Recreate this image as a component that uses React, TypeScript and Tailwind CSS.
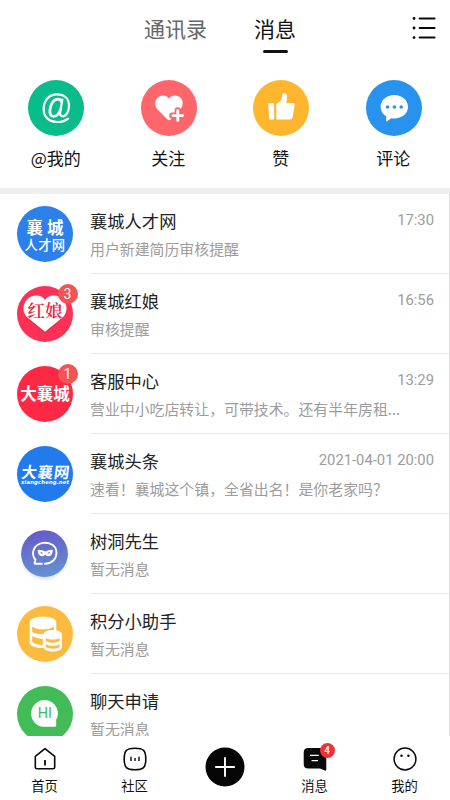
import { useState, type ReactNode } from "react"

interface Conversation {
  id: string
  name: string
  preview: string
  time?: string
  unread?: number
  avatar: ReactNode
}

const AtIcon = () => (
  <svg viewBox="0 0 56 56" className="size-14">
    <circle cx="28" cy="28" r="28" fill="#0abc8b" />
    <g fill="none" stroke="#fff" strokeLinecap="round">
      <path d="M40.2 38.6C37.4 41 33.8 42 29.6 42C20.6 42 15.7 36.7 15.7 29C15.7 20.4 21 14.3 29 14.3C36.6 14.3 41 18.8 41 25.8C41 32.2 38 36.3 34.7 36.3C32.4 36.3 31.7 34.6 32.2 31.6L34.4 19.6" strokeWidth="2.2" />
      <path d="M33.6 21.8C32.8 19.8 31.6 19.2 29.9 19.2C25.4 19.2 22.4 24.4 21.9 29.8C21.5 34 22.8 36.4 25.4 36.4C28.6 36.4 31.2 33.2 32.4 29.6" strokeWidth="2.8" />
    </g>
  </svg>
)

const FollowIcon = () => (
  <svg viewBox="0 0 56 56" className="size-14">
    <circle cx="28" cy="28" r="28" fill="#fd676b" />
    <path d="M28 18.4C25.6 15 20.2 14.5 16.8 17.6C13.2 21 13.4 26 16.6 29.4L26.4 39.5Q28 41 29.6 39.5L39.2 29.4C42.4 26 42.6 21 39.2 17.6C35.8 14.5 30.4 15 28 18.4Z" fill="#fff" />
    <path d="M36.8 30.4V41M31.4 35.6H41.8" stroke="#fd676b" strokeWidth="6.4" strokeLinecap="round" />
    <path d="M36.8 30.8V40.4M32 35.6H41.6" stroke="#fff" strokeWidth="2.9" strokeLinecap="round" />
  </svg>
)

const LikeIcon = () => (
  <svg viewBox="0 0 56 56" className="size-14">
    <circle cx="28" cy="28" r="28" fill="#feb62f" />
    <path d="M15.9 23.3H20.3Q21.1 23.3 21.1 24.1V38.8Q21.1 39.6 20.3 39.6H17.2Q16.3 39.6 16.2 38.7L15.2 24.1Q15.2 23.3 15.9 23.3Z" fill="#fff" />
    <path d="M23.3 25.1Q23.3 23.9 24.5 23.3C28 21.6 29.1 18.7 29.1 15.1C29.1 12 33.9 11.9 34.1 17.1Q34.1 20.2 33.2 22.9H39.9Q41.9 22.9 41.6 25L39.7 37.2Q39.3 39.6 36.8 39.6H24.5Q23.3 39.6 23.3 38.4Z" fill="#fff" />
  </svg>
)

const CommentIcon = () => (
  <svg viewBox="0 0 56 56" className="size-14">
    <circle cx="28" cy="28" r="28" fill="#2793ee" />
    <path d="M28.3 15C36 15 42 20.1 42 26.8C42 33.6 36 38.5 28.3 38.5Q26.8 38.5 25.4 38.3L21 41.3Q20 41.8 20.1 40.6L20.4 36.6C16.9 34.4 14.6 31 14.6 26.8C14.6 20.1 20.6 15 28.3 15Z" fill="#fff" />
    <g fill="#2793ee">
      <circle cx="21.6" cy="27" r="1.8" />
      <circle cx="28.4" cy="27" r="1.8" />
      <circle cx="35.2" cy="27" r="1.8" />
    </g>
  </svg>
)

const JobsAvatar = () => (
  <div className="flex size-14 flex-col items-center rounded-full bg-[#2c80e9] pt-[13px] text-white">
    <div className="flex gap-[4px] text-[16.5px] leading-[17px] font-bold">
      <span>襄</span>
      <span>城</span>
    </div>
    <div className="mt-[2px] text-[13.3px] leading-[14px] font-medium tracking-[0.4px] whitespace-nowrap">人才网</div>
  </div>
)

const MatchAvatar = () => (
  <svg viewBox="0 0 56 56" className="size-14">
    <circle cx="28" cy="28" r="28" fill="#fc3155" />
    <path d="M28 15.2C24.5 8.8 14.5 8.6 9.5 14.3C4.6 20 5.6 27.8 10.6 32.7L28 47.6L45.4 32.7C50.4 27.8 51.4 20 46.5 14.3C41.5 8.6 31.5 8.8 28 15.2Z" fill="#c91f42" opacity="0.4" />
    <path d="M28 13.9C24.5 8.3 15 8.2 10 13.4C5 18.8 5.4 26.6 10.4 31.5L28 45.8L45.6 31.5C50.6 26.6 51 18.8 46 13.4C41 8.2 31.5 8.3 28 13.9Z" fill="#fff" />
    <text x="28" y="31" textAnchor="middle" fontSize="17.5" fontWeight="600" fill="#ee203f" className="font-['Noto_Serif_CJK_SC','Noto_Sans_CJK_SC',serif]">红娘</text>
  </svg>
)

const ServiceAvatar = () => (
  <div className="flex size-14 items-center justify-center rounded-full bg-[#fd2844] pb-px text-[16.5px] leading-none font-bold whitespace-nowrap text-white">
    大襄城
  </div>
)

const NewsAvatar = () => (
  <svg viewBox="0 0 56 56" className="size-14">
    <circle cx="28" cy="28" r="28" fill="#217bec" />
    <g fill="#fff" transform="skewX(-7)">
      <text x="7.6" y="32" fontSize="15.5" fontWeight="700" textLength="48">大襄网</text>
      <text x="8.5" y="38.2" fontSize="5.4" fontWeight="700" textLength="48" className="font-['DejaVu_Sans',sans-serif]">xiangcheng.net</text>
    </g>
  </svg>
)

const TreeHoleAvatar = () => (
  <svg viewBox="0 0 56 56" className="size-14">
    <defs>
      <linearGradient id="treehole" x1="0" y1="0" x2="0.15" y2="1">
        <stop offset="0" stopColor="#6657c9" />
        <stop offset="1" stopColor="#648fd0" />
      </linearGradient>
      <filter id="soft" x="-20%" y="-20%" width="140%" height="150%">
        <feGaussianBlur stdDeviation="1.6" />
      </filter>
    </defs>
    <circle cx="27.5" cy="30.2" r="22.8" fill="#bfc3ee" opacity="0.6" filter="url(#soft)" />
    <circle cx="27.5" cy="27.7" r="23.4" fill="url(#treehole)" />
    <path d="M25 37.8H18.2Q17.3 37.8 17.6 36.9L18.5 33.8C13.4 27.5 16.5 18.5 26 16.9C34 15.8 39.5 20.5 39.5 27C39.5 33 35 37.3 28 37.8" fill="none" stroke="#fff" strokeWidth="1.9" strokeLinecap="round" />
    <path d="M20.7 23.9Q24 23.2 28.3 25.5Q32.5 23.2 35.8 23.9Q35.7 29.6 31.6 30.3Q29.9 30.4 28.3 28.8Q26.6 30.4 24.9 30.3Q20.8 29.6 20.7 23.9Z" fill="#fff" />
    <path d="M23.2 26.3Q24.8 25.8 26 27.3Q24.1 28.2 23.2 26.3ZM33.3 26.3Q31.7 25.8 30.5 27.3Q32.4 28.2 33.3 26.3Z" fill="#645fc8" />
  </svg>
)

const PointsAvatar = () => (
  <svg viewBox="0 0 56 56" className="size-14">
    <circle cx="28" cy="28" r="28" fill="#fcbb3f" />
    <path d="M12.7 16.2C12.7 8.8 39.3 8.8 39.3 16.2V36.5C39.3 43.9 12.7 43.9 12.7 36.5Z" fill="#fff" />
    <path d="M15.2 20.6C20 24.4 32 24.4 36.9 20.6V24C33 23.5 28 24.5 26 28.2C22 28.2 18 27.6 15.2 26ZM15.2 30C18.5 32 21.5 32.7 25.8 32.9V38.9C21.5 38.8 18 38 15.2 36Z" fill="#fcbb3f" />
    <path d="M26.6 28.8C26.6 22.3 45 22.3 45 28.8V41C45 47 26.6 47 26.6 41Z" fill="#fff" />
    <path d="M29 32C32.5 34.2 39 34.2 42.6 32V35C39 37.3 32.5 37.3 29 35ZM29 38.3C32.5 40.5 39 40.5 42.6 38.3V41C39 43.2 32.5 43.2 29 41Z" fill="#fcbb3f" />
  </svg>
)

const ChatRequestAvatar = () => (
  <svg viewBox="0 0 56 56" className="size-14">
    <circle cx="28" cy="28" r="28" fill="#41bc56" />
    <path d="M27.5 14A13.4 13.4 0 0 1 40.9 27.4Q40.8 31 39.2 33.8V39.2Q39.2 40.8 37.6 40.8H27.5A13.4 13.4 0 0 1 27.5 14Z" fill="#fff" />
    <text x="27.8" y="32.4" textAnchor="middle" fontSize="14.5" fill="#41bc56" className="font-[Roboto,sans-serif]">HI</text>
  </svg>
)

const shortcuts = [
  { label: "@我的", icon: <AtIcon /> },
  { label: "关注", icon: <FollowIcon /> },
  { label: "赞", icon: <LikeIcon /> },
  { label: "评论", icon: <CommentIcon /> },
]

const conversations: Conversation[] = [
  { id: "jobs", name: "襄城人才网", preview: "用户新建简历审核提醒", time: "17:30", avatar: <JobsAvatar /> },
  { id: "match", name: "襄城红娘", preview: "审核提醒", time: "16:56", unread: 3, avatar: <MatchAvatar /> },
  { id: "service", name: "客服中心", preview: "营业中小吃店转让，可带技术。还有半年房租...", time: "13:29", unread: 1, avatar: <ServiceAvatar /> },
  { id: "news", name: "襄城头条", preview: "速看！襄城这个镇，全省出名！是你老家吗？", time: "2021-04-01 20:00", avatar: <NewsAvatar /> },
  { id: "treehole", name: "树洞先生", preview: "暂无消息", avatar: <TreeHoleAvatar /> },
  { id: "points", name: "积分小助手", preview: "暂无消息", avatar: <PointsAvatar /> },
  { id: "requests", name: "聊天申请", preview: "暂无消息", avatar: <ChatRequestAvatar /> },
]

const HomeIcon = () => (
  <svg viewBox="0 0 24 24" className="size-6" fill="none" stroke="#0a0a0a" strokeWidth="1.6" strokeLinejoin="round">
    <path d="M2.3 9.4L12 1.6L21.7 9.4V20.2Q21.7 21.8 20.1 21.8H3.9Q2.3 21.8 2.3 20.2Z" />
    <path d="M12 13V18.4" strokeWidth="1.8" />
  </svg>
)

const CommunityIcon = () => (
  <svg viewBox="0 0 24 24" className="size-6" fill="none" stroke="#0a0a0a" strokeWidth="1.6">
    <path d="M12 1.2C20.5 1.2 22.8 3.5 22.8 12S20.5 22.8 12 22.8S1.2 20.5 1.2 12S3.5 1.2 12 1.2Z" />
    <path d="M8 9.8V14M12 11V14M16 9.8V14" strokeWidth="1.4" />
  </svg>
)

const MessageIcon = () => (
  <svg viewBox="0 0 24 24" className="size-6">
    <path d="M5.2 .9H18.8Q23.3 .9 23.3 5.4V22.6Q23.3 24 22 23.6L17 21.6H5.2Q.7 21.6 .7 17.1V5.4Q.7 .9 5.2 .9Z" fill="#0a0a0a" />
    <path d="M7 8.3H15.8M8.6 13.6H15" stroke="#fff" strokeWidth="1.3" />
  </svg>
)

const MeIcon = () => (
  <svg viewBox="0 0 24 24" className="size-6">
    <circle cx="12" cy="12" r="10.9" fill="none" stroke="#0a0a0a" strokeWidth="1.5" />
    <circle cx="8.5" cy="8.7" r="1.2" />
    <circle cx="15.4" cy="8.7" r="1.2" />
  </svg>
)

function NavItem({ label, icon, badge }: { label: string; icon: ReactNode; badge?: number }) {
  return (
    <button className="flex w-[90px] flex-col items-center pt-[11px] pr-px">
      <span className="relative">
        {icon}
        {badge && (
          <span className="absolute -top-[4px] left-[17px] flex size-[15px] items-center justify-center rounded-full bg-[#f52f33] font-[Roboto,sans-serif] text-[10px] leading-none font-medium text-white">
            {badge}
          </span>
        )}
      </span>
      <span className="mt-[5px] text-[13.3px] leading-5 text-[#111]">{label}</span>
    </button>
  )
}

export default function App() {
  const [tab, setTab] = useState("消息")

  return (
    <div className="flex h-[800px] w-[450px] flex-col overflow-hidden bg-white font-['Noto_Sans_CJK_SC',sans-serif]">
      <header className="flex h-[60px] shrink-0 items-start pt-[13px] pr-[14px] pl-[144px]">
        {["通讯录", "消息"].map((name) => (
          <button
            key={name}
            onClick={() => setTab(name)}
            className={`mr-[47px] flex flex-col items-center text-[21px] leading-[30px] ${tab === name ? "text-[#111]" : "text-[#666]"}`}
          >
            {name}
            {tab === name && <span className="mt-[7px] h-[3px] w-[25px] rounded-full bg-[#111]" />}
          </button>
        ))}
        <svg viewBox="0 0 24 24" className="mt-[3px] ml-auto size-6" stroke="#0a0a0a" strokeWidth="2" strokeLinecap="round">
          <path d="M7.6 2.4H22.6M7.6 12H22.6M7.6 21.6H22.6" />
          <path d="M2 2.4H2.1M2 12H2.1M2 21.6H2.1" strokeWidth="2.8" />
        </svg>
      </header>

      <div className="flex h-[128px] shrink-0 pt-[19.5px]">
        {shortcuts.map((item) => (
          <button key={item.label} className="flex w-[112.5px] flex-col items-center">
            {item.icon}
            <span className="mt-[10px] pr-px text-[17px] leading-6 text-[#111]">{item.label}</span>
          </button>
        ))}
      </div>

      <div className="h-[6px] shrink-0 bg-[#efefef]" />

      <main className="min-h-0 flex-1 overflow-hidden border-r border-[#dedede]">
        {conversations.map((item) => (
          <div key={item.id} className="flex h-20 pl-[17px]">
            <div className="relative mt-[12px] size-14 shrink-0">
              {item.avatar}
              {item.unread && (
                <span className="absolute -top-[2px] left-[40.5px] flex size-5 items-center justify-center rounded-full bg-[#f15453] font-[Roboto,sans-serif] text-[14px] leading-none text-white">
                  {item.unread}
                </span>
              )}
            </div>
            <div className="ml-[17px] min-w-0 flex-1 border-b border-[#e8e8e8] pt-[14px]">
              <div className="flex items-start justify-between pr-[15px]">
                <span className="text-[17.3px] leading-[26px] text-[#222]">{item.name}</span>
                <span className="pt-px font-[Roboto,sans-serif] text-[14.8px] leading-[23px] text-[#9c9c9c]">{item.time}</span>
              </div>
              <p className="mt-[4px] text-[14.9px] leading-[22px] whitespace-nowrap text-[#9c9c9c]">{item.preview}</p>
            </div>
          </div>
        ))}
      </main>

      <nav className="flex h-16 shrink-0 bg-white">
        <NavItem label="首页" icon={<HomeIcon />} />
        <NavItem label="社区" icon={<CommunityIcon />} />
        <button className="flex w-[90px] justify-center pt-[11px]">
          <svg viewBox="0 0 40 40" className="size-10">
            <circle cx="20" cy="20" r="19.5" fill="#050505" />
            <path d="M20 10.2V29.8M10.2 20H29.8" stroke="#fff" strokeWidth="1.9" />
          </svg>
        </button>
        <NavItem label="消息" icon={<MessageIcon />} badge={4} />
        <NavItem label="我的" icon={<MeIcon />} />
      </nav>
    </div>
  )
}
